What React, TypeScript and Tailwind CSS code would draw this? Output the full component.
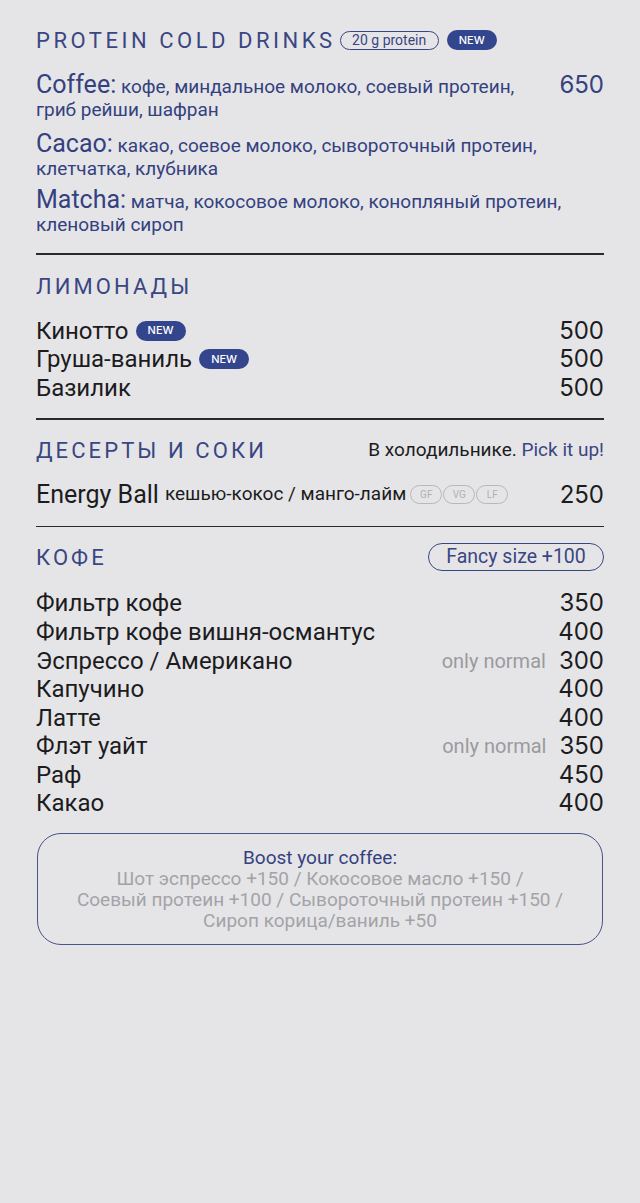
import React from "react";

const font = { fontFamily: "Roboto, 'Liberation Sans', sans-serif" };
const num = { fontFamily: "Inter, Roboto, sans-serif" };

function NewBadge() {
  return (
    <span className="inline-flex items-center justify-center h-[20px] w-[50px] rounded-full bg-[#33458c] text-white text-[11px] font-medium leading-none" style={num}>
      NEW
    </span>
  );
}

function Pill({ children }: { children: React.ReactNode }) {
  return (
    <span className="inline-flex items-center justify-center h-[19px] w-[32px] rounded-full border border-[#b8b8bb] text-[#b0b0b3] text-[10px] leading-none">
      {children}
    </span>
  );
}

function Item({ name, price, note, badge }: { name: string; price: string; note?: string; badge?: boolean }) {
  return (
    <div className="flex items-center justify-between h-[28.57px]">
      <div className="flex items-center gap-[7px] text-[24px] text-[#1c1c1e]">
        <span>{name}</span>
        {badge && <NewBadge />}
      </div>
      <div className="flex items-center gap-[13px]">
        {note && <span className="text-[20px] text-[#9a9a9e]">{note}</span>}
        <span className="text-[24px] text-[#1c1c1e]" style={num}>{price}</span>
      </div>
    </div>
  );
}

export default function App() {
  return (
    <div className="w-[640px] min-h-[1203px] bg-[#e5e5e7] px-[36px] pt-[25px]" style={font}>
      {/* Protein cold drinks */}
      <div className="flex items-center gap-[8px] h-[30px]">
        <h2 className="text-[22px] tracking-[0.16em] text-[#3a4682]">PROTEIN COLD DRINKS</h2>
        <span className="inline-flex items-center justify-center h-[19px] w-[99px] -ml-[4px] rounded-full border border-[#3a4682] text-[#3a4682] text-[14px] leading-none">20 g protein</span>
        <NewBadge />
      </div>
      <div className="mt-[18px] text-[#34417f]">
        <div className="flex justify-between">
          <p className="text-[19px] leading-[23px]"><span className="text-[25px] leading-[23px]">Coffee:</span> кофе, миндальное молоко, соевый протеин,<br />гриб рейши, шафран</p>
          <span className="text-[24px] leading-[23px]" style={num}>650</span>
        </div>
        <p className="text-[19px] leading-[23px] mt-[11px]"><span className="text-[25px] leading-[23px]">Cacao:</span> какао, соевое молоко, сывороточный протеин,<br />клетчатка, клубника</p>
        <p className="text-[19px] leading-[23px] mt-[8px]"><span className="text-[25px] leading-[23px]">Matcha:</span> матча, кокосовое молоко, конопляный протеин,<br />кленовый сироп</p>
      </div>
      <div className="mt-[17px] h-[1.5px] bg-[#2a2a2e]" />

      {/* Лимонады */}
      <h2 className="mt-[17px] h-[30px] flex items-center text-[22px] tracking-[0.14em] text-[#3a4682]">ЛИМОНАДЫ</h2>
      <div className="mt-[15px]">
        <Item name="Кинотто" price="500" badge />
        <Item name="Груша-ваниль" price="500" badge />
        <Item name="Базилик" price="500" />
      </div>
      <div className="mt-[16px] h-[1.5px] bg-[#2a2a2e]" />

      {/* Десерты */}
      <div className="mt-[16px] flex items-center justify-between h-[30px]">
        <h2 className="text-[22px] tracking-[0.14em] text-[#3a4682]">ДЕСЕРТЫ И СОКИ</h2>
        <span className="text-[19px] text-[#1c1c1e]">В холодильнике. <span className="text-[#3a4682]">Pick it up!</span></span>
      </div>
      <div className="mt-[15px] flex items-center justify-between h-[28px]">
        <div className="flex items-center text-[#1c1c1e]">
          <span className="text-[25px]">Energy Ball</span>
          <span className="text-[19px] ml-[6px]">кешью-кокос / манго-лайм</span>
          <span className="flex ml-[4px] gap-[1px]"><Pill>GF</Pill><Pill>VG</Pill><Pill>LF</Pill></span>
        </div>
        <span className="text-[24px] text-[#1c1c1e]" style={num}>250</span>
      </div>
      <div className="mt-[17px] h-[1.5px] bg-[#2a2a2e]" />

      {/* Кофе */}
      <div className="mt-[15px] flex items-center justify-between h-[30px]">
        <h2 className="text-[22px] tracking-[0.14em] text-[#3a4682]">КОФЕ</h2>
        <span className="inline-flex items-center justify-center h-[28px] w-[176px] rounded-full border border-[#3a4682] text-[#3a4682] text-[19.5px] leading-none">Fancy size +100</span>
      </div>
      <div className="mt-[17px]">
        <Item name="Фильтр кофе" price="350" />
        <Item name="Фильтр кофе вишня-османтус" price="400" />
        <Item name="Эспрессо / Американо" price="300" note="only normal" />
        <Item name="Капучино" price="400" />
        <Item name="Латте" price="400" />
        <Item name="Флэт уайт" price="350" note="only normal" />
        <Item name="Раф" price="450" />
        <Item name="Какао" price="400" />
      </div>

      <div className="mt-[15px] mx-[1px] h-[112px] flex flex-col justify-center rounded-[24px] border-[1.5px] border-[#4a5488] text-center text-[19px] leading-[21px]">
        <div className="text-[#34417f]">Boost your coffee:</div>
        <div className="text-[#a3a3a7]">Шот эспрессо +150 / Кокосовое масло +150 /</div>
        <div className="text-[#a3a3a7]">Соевый протеин +100 / Сывороточный протеин +150 /</div>
        <div className="text-[#a3a3a7]">Сироп корица/ваниль +50</div>
      </div>
    </div>
  );
}
